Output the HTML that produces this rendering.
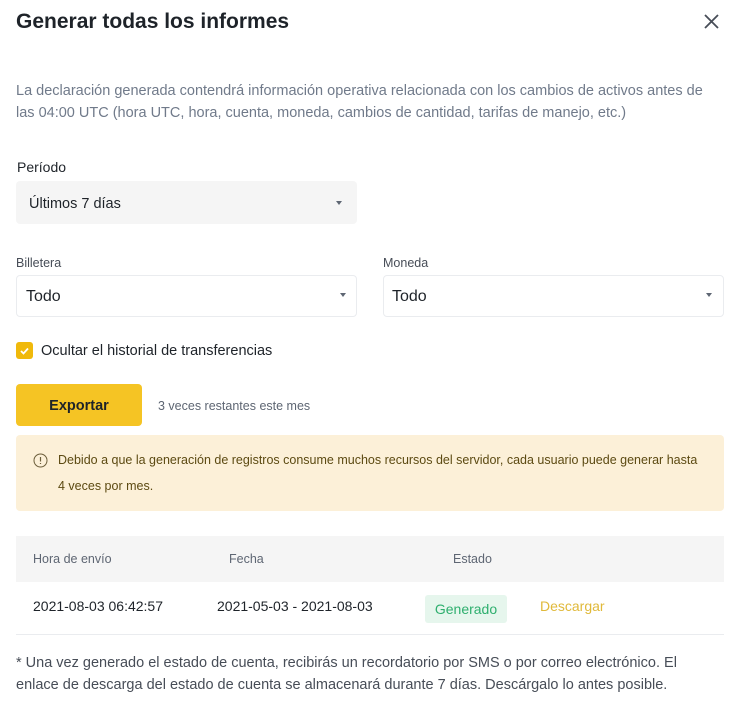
<!DOCTYPE html>
<html><head><meta charset="utf-8"><style>
*{margin:0;padding:0;box-sizing:border-box}
body{width:742px;height:705px;background:#fff;font-family:"Liberation Sans",sans-serif;color:#1e2329;position:relative;overflow:hidden}
.a{position:absolute;white-space:nowrap}
.sel{position:absolute;border:1px solid #eaecef;border-radius:4px;background:#fff}
.arr{position:absolute;width:0;height:0;border-left:3.5px solid transparent;border-right:3.5px solid transparent;border-top:4px solid #5e6673}
</style></head><body>
<div class="a" style="left:16px;top:10px;font-size:21px;font-weight:600">Generar todas los informes</div>
<svg class="a" style="left:703px;top:13px" width="17" height="17" viewBox="0 0 17 17"><path d="M2 2L15 15M15 2L2 15" stroke="#474d57" stroke-width="1.8"/></svg>
<div class="a" style="left:16px;top:80px;font-size:14.5px;line-height:22px;color:#707a8a;white-space:normal;width:705px">La declaración generada contendrá información operativa relacionada con los cambios de activos antes de las 04:00 UTC (hora UTC, hora, cuenta, moneda, cambios de cantidad, tarifas de manejo, etc.)</div>
<div class="a" style="left:17px;top:159px;font-size:14px">Período</div>
<div class="a" style="left:16px;top:181px;width:341px;height:43px;background:#f5f5f5;border-radius:4px"></div>
<div class="a" style="left:29px;top:196px;font-size:14.5px">Últimos 7 días</div>
<div class="arr" style="left:336px;top:201px"></div>
<div class="a" style="left:16px;top:256px;font-size:12.5px;color:#474d57">Billetera</div>
<div class="a" style="left:383px;top:256px;font-size:12.5px;color:#474d57">Moneda</div>
<div class="sel" style="left:16px;top:275px;width:341px;height:42px"></div>
<div class="sel" style="left:383px;top:275px;width:341px;height:42px"></div>
<div class="a" style="left:26px;top:288px;font-size:16px">Todo</div>
<div class="a" style="left:392px;top:288px;font-size:16px">Todo</div>
<div class="arr" style="left:340px;top:293px"></div>
<div class="arr" style="left:706px;top:293px"></div>
<div class="a" style="left:16px;top:342px;width:17px;height:17px;background:#f0b90b;border-radius:3px"></div>
<svg class="a" style="left:16px;top:342px" width="17" height="17"><path d="M5 9L7.5 11.5L12 6.5" stroke="#fff" stroke-width="1.8" fill="none"/></svg>
<div class="a" style="left:41px;top:343px;font-size:14.5px;color:#1e2329">Ocultar el historial de transferencias</div>
<div class="a" style="left:16px;top:384px;width:126px;height:42px;background:#f5c424;border-radius:4px;font-size:14.5px;font-weight:600;text-align:center;line-height:44px">Exportar</div>
<div class="a" style="left:158px;top:399px;font-size:12.5px;color:#5e6673">3 veces restantes este mes</div>
<div class="a" style="left:16px;top:435px;width:708px;height:76px;background:#fcf0d8;border-radius:4px"></div>
<svg class="a" style="left:33px;top:453px" width="15" height="15"><circle cx="7.5" cy="7.5" r="6.5" stroke="#6b5d3a" fill="none" stroke-width="1"/><path d="M7.5 4v4.5M7.5 10v1" stroke="#6b5d3a" stroke-width="1.2"/></svg>
<div class="a" style="left:58px;top:453px;font-size:12.5px;color:#5c4a12">Debido a que la generación de registros consume muchos recursos del servidor, cada usuario puede generar hasta</div>
<div class="a" style="left:58px;top:479px;font-size:12.5px;color:#5c4a12">4 veces por mes.</div>
<div class="a" style="left:16px;top:536px;width:708px;height:46px;background:#f5f5f5"></div>
<div class="a" style="left:33px;top:552px;font-size:12.5px;color:#5e6673">Hora de envío</div>
<div class="a" style="left:229px;top:552px;font-size:12.5px;color:#5e6673">Fecha</div>
<div class="a" style="left:453px;top:552px;font-size:12.5px;color:#5e6673">Estado</div>
<div class="a" style="left:33px;top:598px;font-size:14px">2021-08-03 06:42:57</div>
<div class="a" style="left:217px;top:598px;font-size:14px">2021-05-03 - 2021-08-03</div>
<div class="a" style="left:425px;top:595px;width:82px;height:28px;background:#e6f6ed;border-radius:3px;font-size:14px;color:#2eaf6e;text-align:center;line-height:28px">Generado</div>
<div class="a" style="left:540px;top:598px;font-size:14px;color:#e0b93a">Descargar</div>
<div class="a" style="left:16px;top:634px;width:708px;height:1px;background:#eaecef"></div>
<div class="a" style="left:16px;top:652px;font-size:14.5px;line-height:22px;color:#474d57;white-space:normal;width:690px">* Una vez generado el estado de cuenta, recibirás un recordatorio por SMS o por correo electrónico. El enlace de descarga del estado de cuenta se almacenará durante 7 días. Descárgalo lo antes posible.</div>
</body></html>
